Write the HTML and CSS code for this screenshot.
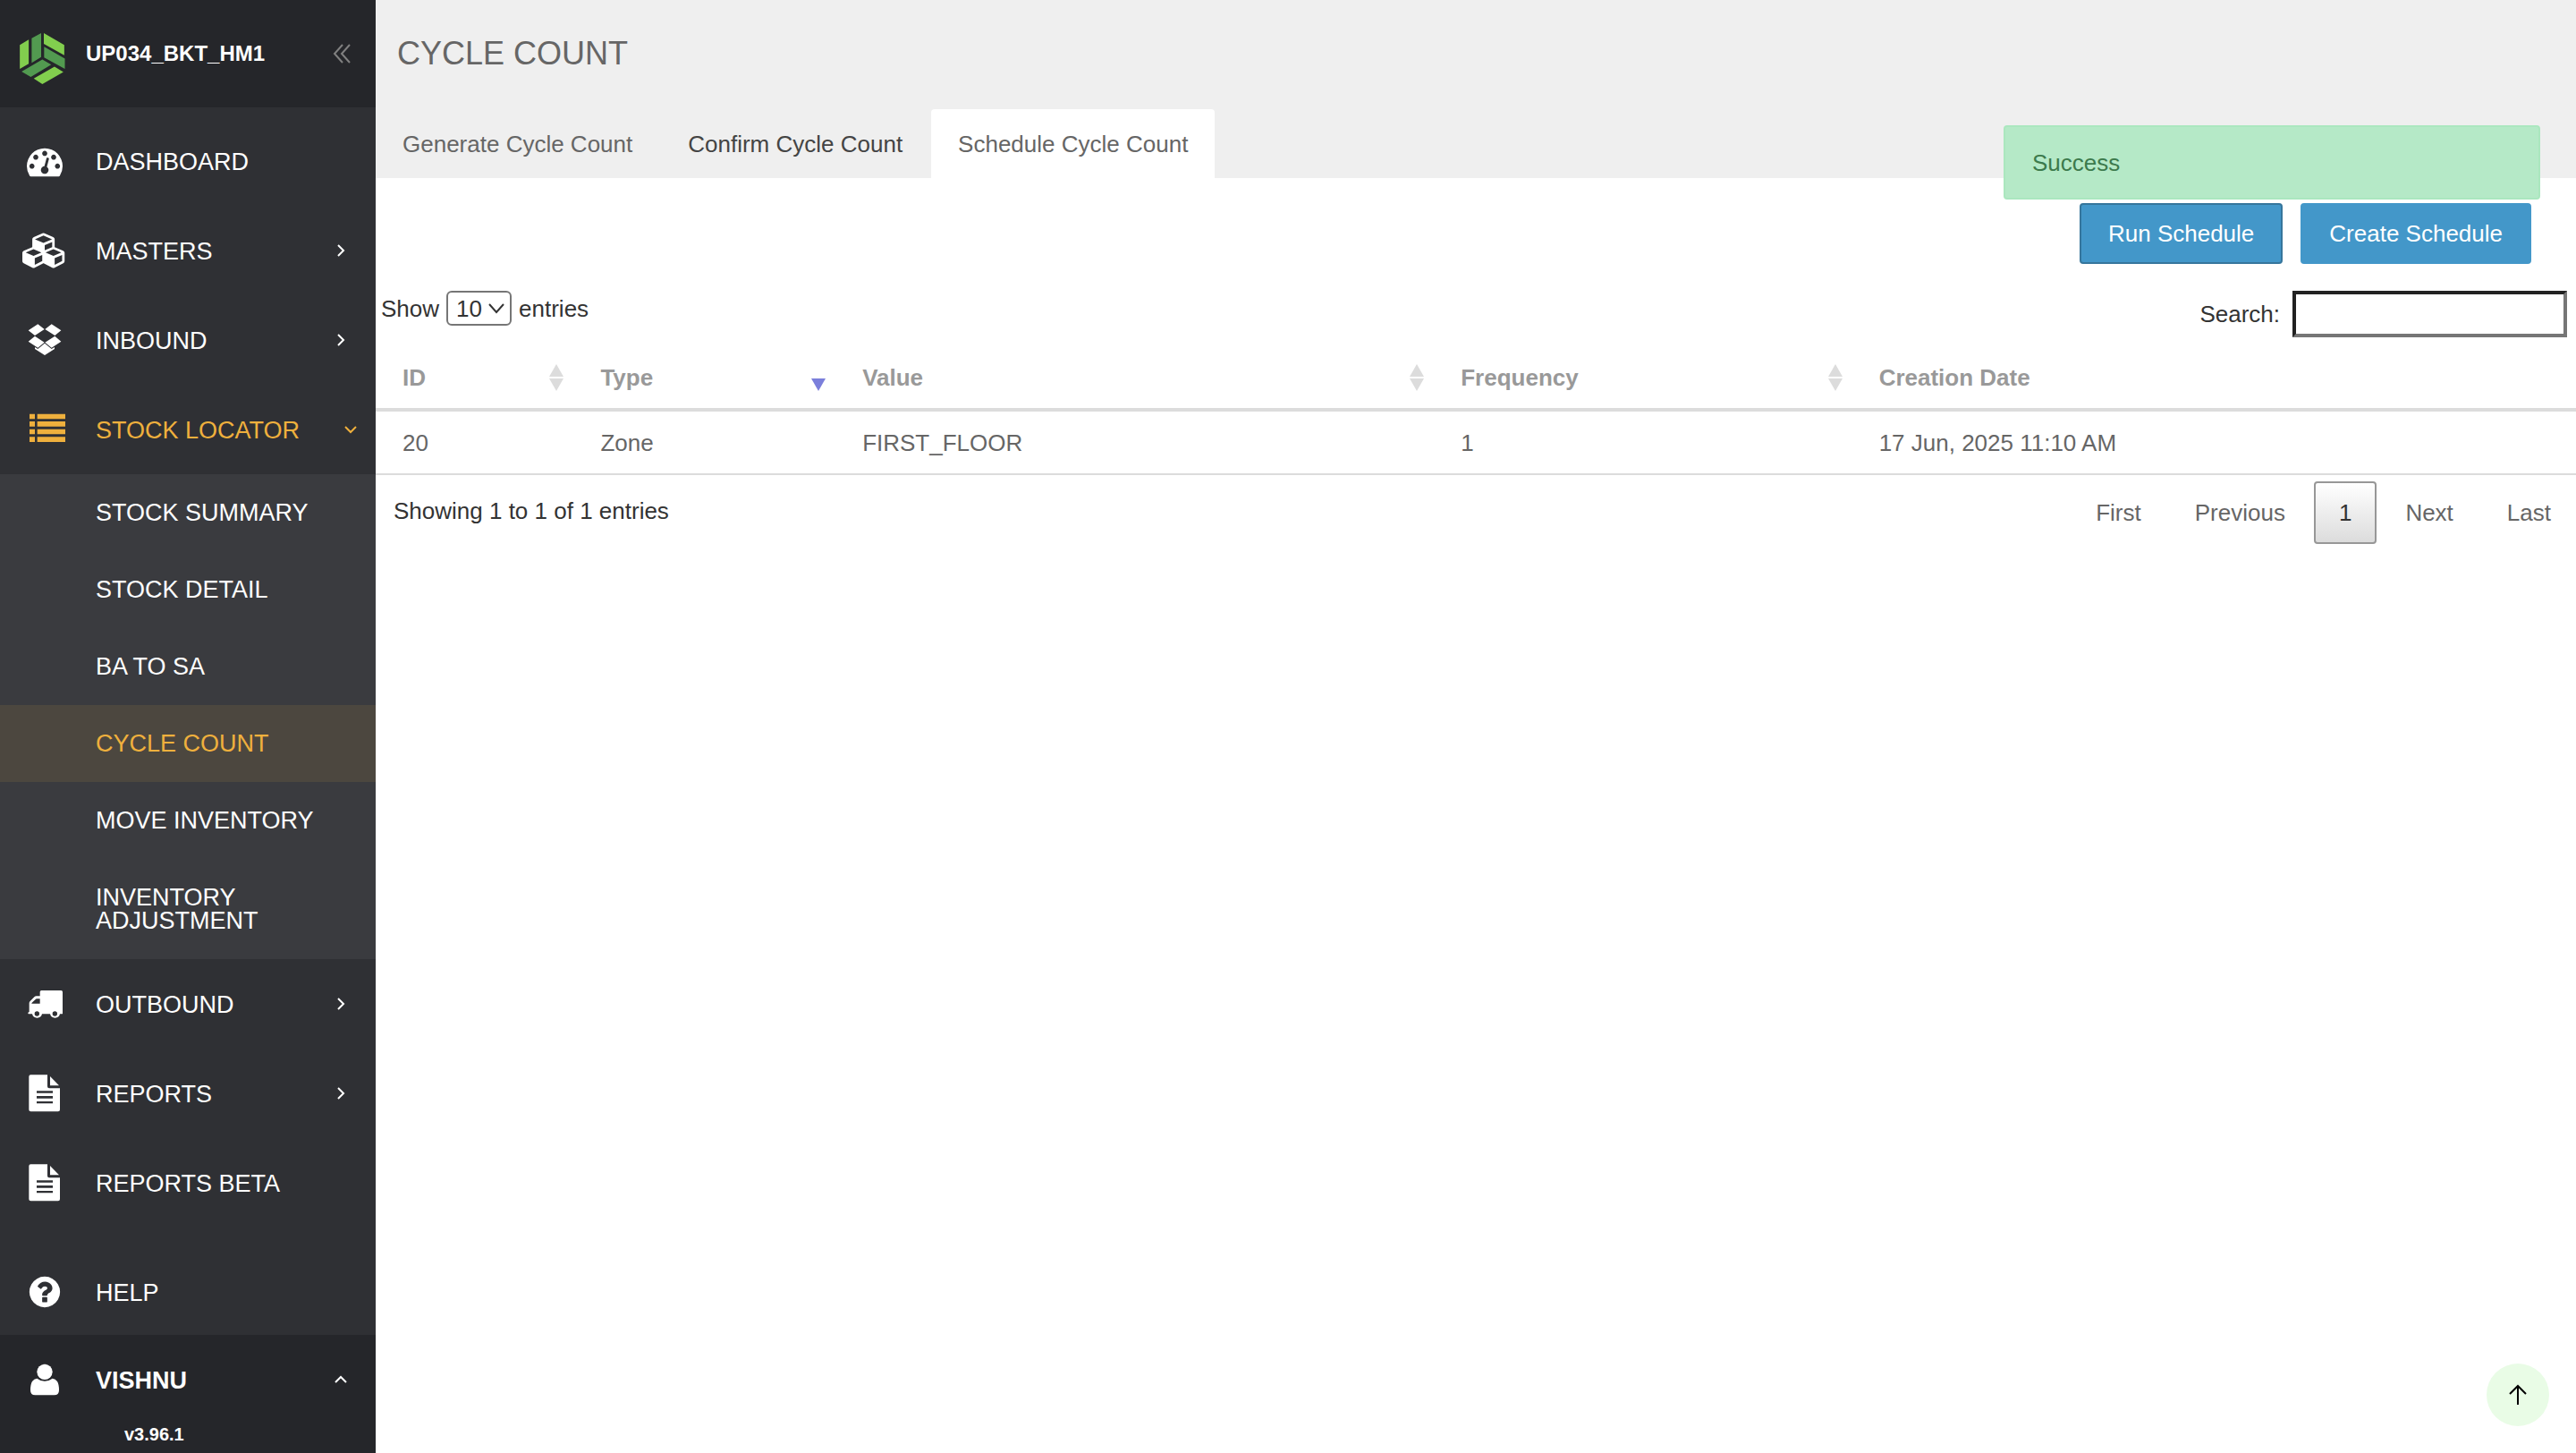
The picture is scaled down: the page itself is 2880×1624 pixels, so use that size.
FILE: index.html
```html
<!DOCTYPE html>
<html lang="en">
<head>
    <meta charset="UTF-8">
    <title>Cycle Count</title>
    <link rel="stylesheet" href="styles.css">
</head>
<body>
<div class="page">
    <aside class="sidebar">
        <div class="brand">
            <svg class="brand-logo" viewBox="66 110 153 172">
                <path fill="#82ce4e" d="M66 150L96 132V213L66 231zM147 110L216 150V185L147 146zM113 263L183 223 213 241 142 282z"/>
                <path fill="#529a50" d="M106 127L138 110V191L106 210zM148 156L218 196V231L148 192zM72 240L142 199 172 216 103 258z"/>
            </svg>
            <span class="brand-name">UP034_BKT_HM1</span>
            <button class="collapse" type="button" aria-label="Collapse menu">
                <svg viewBox="0 0 20 22"><path d="M11 1L2 11l9 10M19 1l-9 10 9 10"/></svg>
            </button>
        </div>

        <nav class="menu">
            <a class="item" href="#">
                <svg class="icon" viewBox="0 0 1792 1792"><path d="M384 1152q0-53-37.500-90.500t-90.500-37.500-90.500 37.500-37.500 90.500 37.500 90.500 90.500 37.500 90.500-37.500 37.500-90.500zm192-448q0-53-37.500-90.500t-90.500-37.500-90.500 37.500-37.500 90.500 37.500 90.500 90.500 37.500 90.500-37.500 37.500-90.500zm428 481l101-382q6-26-7.500-48.500t-38.500-29.500-48 6.500-30 39.500l-101 382q-60 5-107 43.500t-63 98.500q-20 77 20 146t117 89 146-20 89-117q16-60-6-117t-72-91zm660-33q0-53-37.500-90.500t-90.500-37.500-90.500 37.500-37.500 90.500 37.500 90.500 90.500 37.500 90.500-37.500 37.500-90.500zm-640-640q0-53-37.500-90.500t-90.500-37.500-90.500 37.500-37.500 90.500 37.500 90.500 90.500 37.500 90.500-37.500 37.500-90.500zm448 192q0-53-37.500-90.500t-90.500-37.500-90.500 37.500-37.500 90.500 37.500 90.500 90.500 37.500 90.500-37.500 37.500-90.500zm320 448q0 261-141 483-19 29-54 29h-1402q-35 0-54-29-141-221-141-483 0-182 71-348t191-286 286-191 348-71 348 71 286 191 191 286 71 348z"/></svg>
                <span class="label">DASHBOARD</span>
            </a>
            <a class="item" href="#">
                <svg class="icon icon-wide" viewBox="0 0 2304 1792"><path d="M640 1632l384-192v-314l-384 164v342zm-64-454l404-173-404-173-404 173zm1088 454l384-192v-314l-384 164v342zm-64-454l404-173-404-173-404 173zm-448-293l384-165v-266l-384 164v267zm-64-379l441-189-441-189-441 189zm1088 518v416q0 36-19 67t-52 47l-448 224q-25 14-57 14t-57-14l-448-224q-5-2-7-4-2 2-7 4l-448 224q-25 14-57 14t-57-14l-448-224q-33-16-52-47t-19-67v-416q0-38 21.500-70t56.500-48l434-186v-400q0-38 21.500-70t56.500-48l448-192q23-10 50-10t50 10l448 192q35 16 56.500 48t21.500 70v400l434 186q36 16 57 48t21 70z"/></svg>
                <span class="label">MASTERS</span>
                <svg class="chevron" viewBox="0 0 14 14"><path d="M4 1l6 6-6 6"/></svg>
            </a>
            <a class="item" href="#">
                <svg class="icon" viewBox="90 120 120 120"><path d="M95 148L127 127 149 144 117 165zM151 144L173 127 205 148 184 165zM95 185L117 167 149 188 127 206zM151 188L184 167 205 185 173 206zM150 191L173 210 183 204V210L150 231 117 210V204L127 210z"/></svg>
                <span class="label">INBOUND</span>
                <svg class="chevron" viewBox="0 0 14 14"><path d="M4 1l6 6-6 6"/></svg>
            </a>
            <a class="item open" href="#">
                <svg class="icon" viewBox="90 420 120 120"><path d="M99 428h18v17h-18zM125 428h94v17h-94zM99 453h18v17h-18zM125 453h94v17h-94zM99 479h18v17h-18zM125 479h94v17h-94zM99 505h18v17h-18zM125 505h94v17h-94z"/></svg>
                <span class="label">STOCK LOCATOR</span>
                <svg class="chevron" viewBox="0 0 14 14"><path d="M1 4l6 6 6-6"/></svg>
            </a>
            <div class="submenu">
                <a href="#">STOCK SUMMARY</a>
                <a href="#">STOCK DETAIL</a>
                <a href="#">BA TO SA</a>
                <a class="current" href="#">CYCLE COUNT</a>
                <a href="#">MOVE INVENTORY</a>
                <a href="#">INVENTORY ADJUSTMENT</a>
            </div>
            <a class="item" href="#">
                <svg class="icon" viewBox="90 126 120 120"><path fill-rule="evenodd" d="M139 141H205Q210 141 210 146V218Q210 220 207 220H201A17 17 0 0 1 168 220H141A17 17 0 0 1 108 220H96Q94 220 94 217 94 214 98 213V184Q98 180 101 177L115 163Q118 160 122 160H134V146Q134 141 139 141zM106 185H134V169H123Q121 169 119 171L107 182Q106 183 106 185zM124 211A8 8 0 1 0 124 227 8 8 0 1 0 124 211zM184 211A8 8 0 1 0 184 227 8 8 0 1 0 184 211z"/></svg>
                <span class="label">OUTBOUND</span>
                <svg class="chevron" viewBox="0 0 14 14"><path d="M4 1l6 6-6 6"/></svg>
            </a>
            <a class="item" href="#">
                <svg class="icon icon-file" viewBox="90 423 120 124"><path fill-rule="evenodd" d="M103 423H159V462Q159 468 165 468H201V540Q201 546 195 546H103Q97 546 97 540V429Q97 423 103 423zM168 428L198 459H168zM123 477V484H177V477zM123 494V502H177V494zM123 512V519H177V512z"/></svg>
                <span class="label">REPORTS</span>
                <svg class="chevron" viewBox="0 0 14 14"><path d="M4 1l6 6-6 6"/></svg>
            </a>
            <a class="item" href="#">
                <svg class="icon icon-file" viewBox="90 423 120 124"><path fill-rule="evenodd" d="M103 423H159V462Q159 468 165 468H201V540Q201 546 195 546H103Q97 546 97 540V429Q97 423 103 423zM168 428L198 459H168zM123 477V484H177V477zM123 494V502H177V494zM123 512V519H177V512z"/></svg>
                <span class="label">REPORTS BETA</span>
            </a>
        </nav>

        <a class="item help" href="#">
            <svg class="icon" viewBox="0 0 1792 1792"><path d="M1024 1376v-192q0-14-9-23t-23-9h-192q-14 0-23 9t-9 23v192q0 14 9 23t23 9h192q14 0 23-9t9-23zm256-672q0-88-55.500-163t-138.500-116-170-41q-243 0-371 213-15 24 8 42l132 100q7 6 19 6 16 0 25-12 53-68 86-92 34-24 86-24 48 0 85.500 26t37.500 59q0 38-20 61t-68 45q-63 28-115.500 86.500t-52.500 125.500v36q0 14 9 23t23 9h192q14 0 23-9t9-23q0-19 21.500-49.500t54.500-49.500q32-18 49-28.500t46-35 44.500-48 28-60.500 12.500-81zm384 192q0 209-103 385.500t-279.500 279.500-385.500 103-385.500-103-279.500-279.500-103-385.500 103-385.500 279.500-279.500 385.500-103 385.500 103 279.500 279.500 103 385.500z"/></svg>
            <span class="label">HELP</span>
        </a>
        <div class="user">
            <a class="item" href="#">
                <svg class="icon" viewBox="90 545 120 120"><circle cx="150" cy="579" r="26"/><path d="M124 601Q136 610 150 610 164 610 176 601 186 602 192 611 198 621 198 640 198 657 182 657H118Q102 657 102 640 102 621 108 611 114 602 124 601z"/></svg>
                <span class="label">VISHNU</span>
                <svg class="chevron" viewBox="0 0 14 14"><path d="M1 10l6-6 6 6"/></svg>
            </a>
            <div class="version">v3.96.1</div>
        </div>
    </aside>

    <main class="main">
        <header class="head">
            <h1>CYCLE COUNT</h1>
            <nav class="tabs">
                <a href="#">Generate Cycle Count</a>
                <a class="hover" href="#">Confirm Cycle Count</a>
                <a class="active" href="#">Schedule Cycle Count</a>
            </nav>
        </header>

        <div class="actions">
            <button class="btn focused" type="button">Run Schedule</button>
            <button class="btn" type="button">Create Schedule</button>
        </div>

        <div class="controls">
            <div class="length">
                <label for="length">Show</label>
                <span class="select">
                    <select id="length">
                        <option>10</option>
                        <option>25</option>
                        <option>50</option>
                        <option>100</option>
                    </select>
                    <svg viewBox="0 0 18 12"><path d="M1 1l8 9 8-9"/></svg>
                </span>
                <span>entries</span>
            </div>
            <div class="search">
                <label for="search">Search:</label>
                <input type="search" id="search">
            </div>
        </div>

        <table class="list">
            <colgroup>
                <col class="col-id">
                <col class="col-type">
                <col class="col-value">
                <col class="col-freq">
                <col>
            </colgroup>
            <thead>
            <tr>
                <th><div class="th">ID<svg class="sort" viewBox="0 0 16 30"><path d="M8 0l8 14H0zM8 30l8-14H0z"/></svg></div></th>
                <th><div class="th">Type<svg class="sort desc" viewBox="0 0 16 30"><path d="M8 30l8-14H0z"/></svg></div></th>
                <th><div class="th">Value<svg class="sort" viewBox="0 0 16 30"><path d="M8 0l8 14H0zM8 30l8-14H0z"/></svg></div></th>
                <th><div class="th">Frequency<svg class="sort" viewBox="0 0 16 30"><path d="M8 0l8 14H0zM8 30l8-14H0z"/></svg></div></th>
                <th><div class="th">Creation Date</div></th>
            </tr>
            </thead>
            <tbody>
            <tr>
                <td>20</td>
                <td>Zone</td>
                <td>FIRST_FLOOR</td>
                <td>1</td>
                <td>17 Jun, 2025 11:10 AM</td>
            </tr>
            </tbody>
        </table>

        <div class="foot">
            <div class="info">Showing 1 to 1 of 1 entries</div>
            <nav class="pages">
                <a href="#">First</a>
                <a href="#">Previous</a>
                <a class="on" href="#">1</a>
                <a href="#">Next</a>
                <a href="#">Last</a>
            </nav>
        </div>
    </main>
</div>

<div class="alert" role="alert">Success</div>
<button class="to-top" type="button" aria-label="Back to top">
    <svg viewBox="0 0 20 24"><path d="M10 23V2M1 11l9-9 9 9"/></svg>
</button>
</body>
</html>
```

FILE: styles.css
```css
*{
    box-sizing: border-box;
}
body{
    margin: 0;
    background: #fff;
    color: #333;
    font: 26px/30px "Liberation Sans", Arial, sans-serif;
}
a{
    color: inherit;
    text-decoration: none;
}
button, input, select{
    font: inherit;
    color: inherit;
}
.page{
    display: flex;
    min-height: 100vh;
}

/* sidebar */
.sidebar{
    display: flex;
    flex-direction: column;
    flex: none;
    width: 420px;
    background: #2f3034;
    color: #fff;
    font-size: 27px;
}
.brand{
    display: flex;
    align-items: center;
    height: 120px;
    padding: 0 28px 0 22px;
    background: #25262a;
}
.brand-logo{
    width: 51px;
    height: 57px;
    margin-top: 10px;
}
.brand-name{
    flex: 1;
    margin-left: 23px;
    font-size: 24px;
    font-weight: bold;
}
.collapse{
    padding: 0;
    border: 0;
    background: none;
}
.collapse svg{
    display: block;
    width: 20px;
    height: 22px;
    fill: none;
    stroke: #808080;
    stroke-width: 2;
}
.menu{
    padding-top: 10px;
}
.item{
    display: grid;
    grid-template-columns: 100px 1fr 78px;
    align-items: center;
    height: 100px;
}
.icon{
    justify-self: center;
    width: 40px;
    height: 40px;
    overflow: visible;
    fill: currentColor;
}
.icon-wide{
    width: 50px;
}
.icon-file{
    height: 42px;
}
.label{
    padding: 2px 0 0 7px;
    white-space: nowrap;
}
.chevron{
    justify-self: center;
    width: 14px;
    height: 14px;
    fill: none;
    stroke: currentColor;
    stroke-width: 2;
}
.open{
    grid-template-columns: 100px 1fr 56px;
    color: #efb03d;
}
.submenu{
    background: #3a3b3f;
    line-height: 26px;
}
.submenu a{
    display: block;
    padding: 30px 60px 30px 107px;
}
.submenu .current{
    background: #4c473f;
    color: #efb03d;
}
.help{
    margin-top: auto;
    padding-top: 4px;
}
.user{
    height: 132px;
    background: #25262a;
    font-weight: bold;
}
.version{
    padding-left: 139px;
    font-size: 20px;
    line-height: 22px;
}

/* content */
.main{
    flex: 1;
}
.head{
    background: #efefef;
}
h1{
    margin: 0;
    padding: 40px 24px 42px;
    color: #666;
    font-size: 36px;
    font-weight: normal;
    line-height: 40px;
}
.tabs{
    display: flex;
    gap: 2px;
}
.tabs a{
    padding: 24px 30px 23px;
    color: #666;
}
.tabs .hover{
    color: #444;
}
.tabs .active{
    background: #fff;
    border-radius: 4px 4px 0 0;
}
.actions{
    display: flex;
    justify-content: flex-end;
    gap: 20px;
    padding: 28px 50px 30px;
}
.btn{
    padding: 17px 30px;
    border: 2px solid #4397c9;
    border-radius: 4px;
    background: #4397c9;
    color: #fff;
}
.btn.focused{
    border-color: #36769c;
}
.controls{
    display: flex;
    justify-content: space-between;
    align-items: flex-start;
    padding: 0 10px 0 6px;
}
.length{
    display: flex;
    align-items: center;
    gap: 8px;
}
.select{
    position: relative;
}
.select select{
    display: block;
    width: 73px;
    height: 39px;
    padding: 0 9px;
    appearance: none;
    border: 2px solid #767676;
    border-radius: 6px;
    background: #fff;
}
.select svg{
    position: absolute;
    right: 8px;
    top: 14px;
    width: 18px;
    height: 12px;
    fill: none;
    stroke: #333;
    stroke-width: 2;
    pointer-events: none;
}
.search{
    display: flex;
    align-items: center;
    gap: 14px;
}
.search input{
    width: 307px;
    height: 52px;
    padding: 4px;
    appearance: none;
    border: 4px solid;
    border-color: #222 #767676 #767676 #222;
    border-radius: 0;
    background: #fff;
}
.list{
    width: 100%;
    table-layout: fixed;
    border-collapse: separate;
    border-spacing: 0;
    color: #666;
    text-align: left;
}
.col-id{
    width: 9%;
}
.col-type{
    width: 11.9%;
}
.col-value{
    width: 27.2%;
}
.col-freq{
    width: 19%;
}
.list th{
    padding: 30px 11px 19px 30px;
    border-bottom: 4px solid #dcdcdc;
    color: #999;
}
.list td{
    padding: 20px 30px 19px;
    border-bottom: 2px solid #dcdcdc;
}
.th{
    display: flex;
    justify-content: space-between;
}
.sort{
    width: 16px;
    height: 30px;
    fill: #dcdcdc;
}
.sort.desc{
    fill: #7b7fdb;
}
.foot{
    display: flex;
    justify-content: space-between;
    align-items: flex-start;
    padding-top: 7px;
}
.info{
    padding: 18px 0 0 20px;
}
.pages{
    display: flex;
    gap: 4px;
}
.pages a{
    padding: 18px 26px;
    border: 2px solid transparent;
    border-radius: 4px;
    color: #666;
}
.pages .on{
    border-color: #979797;
    background: linear-gradient(#fff, #dcdcdc);
    color: #333;
}

.alert{
    position: fixed;
    top: 140px;
    right: 40px;
    width: 600px;
    padding: 25px 30px 24px;
    border: 2px solid #abe7bf;
    border-radius: 4px;
    background: #b5e9c7;
    color: #3c7a4c;
}
.to-top{
    position: fixed;
    right: 30px;
    bottom: 30px;
    display: flex;
    align-items: center;
    justify-content: center;
    width: 70px;
    height: 70px;
    padding: 0;
    border: 0;
    border-radius: 50%;
    background: #e9fce6;
}
.to-top svg{
    width: 20px;
    height: 24px;
    fill: none;
    stroke: #000;
    stroke-width: 2;
}
```
